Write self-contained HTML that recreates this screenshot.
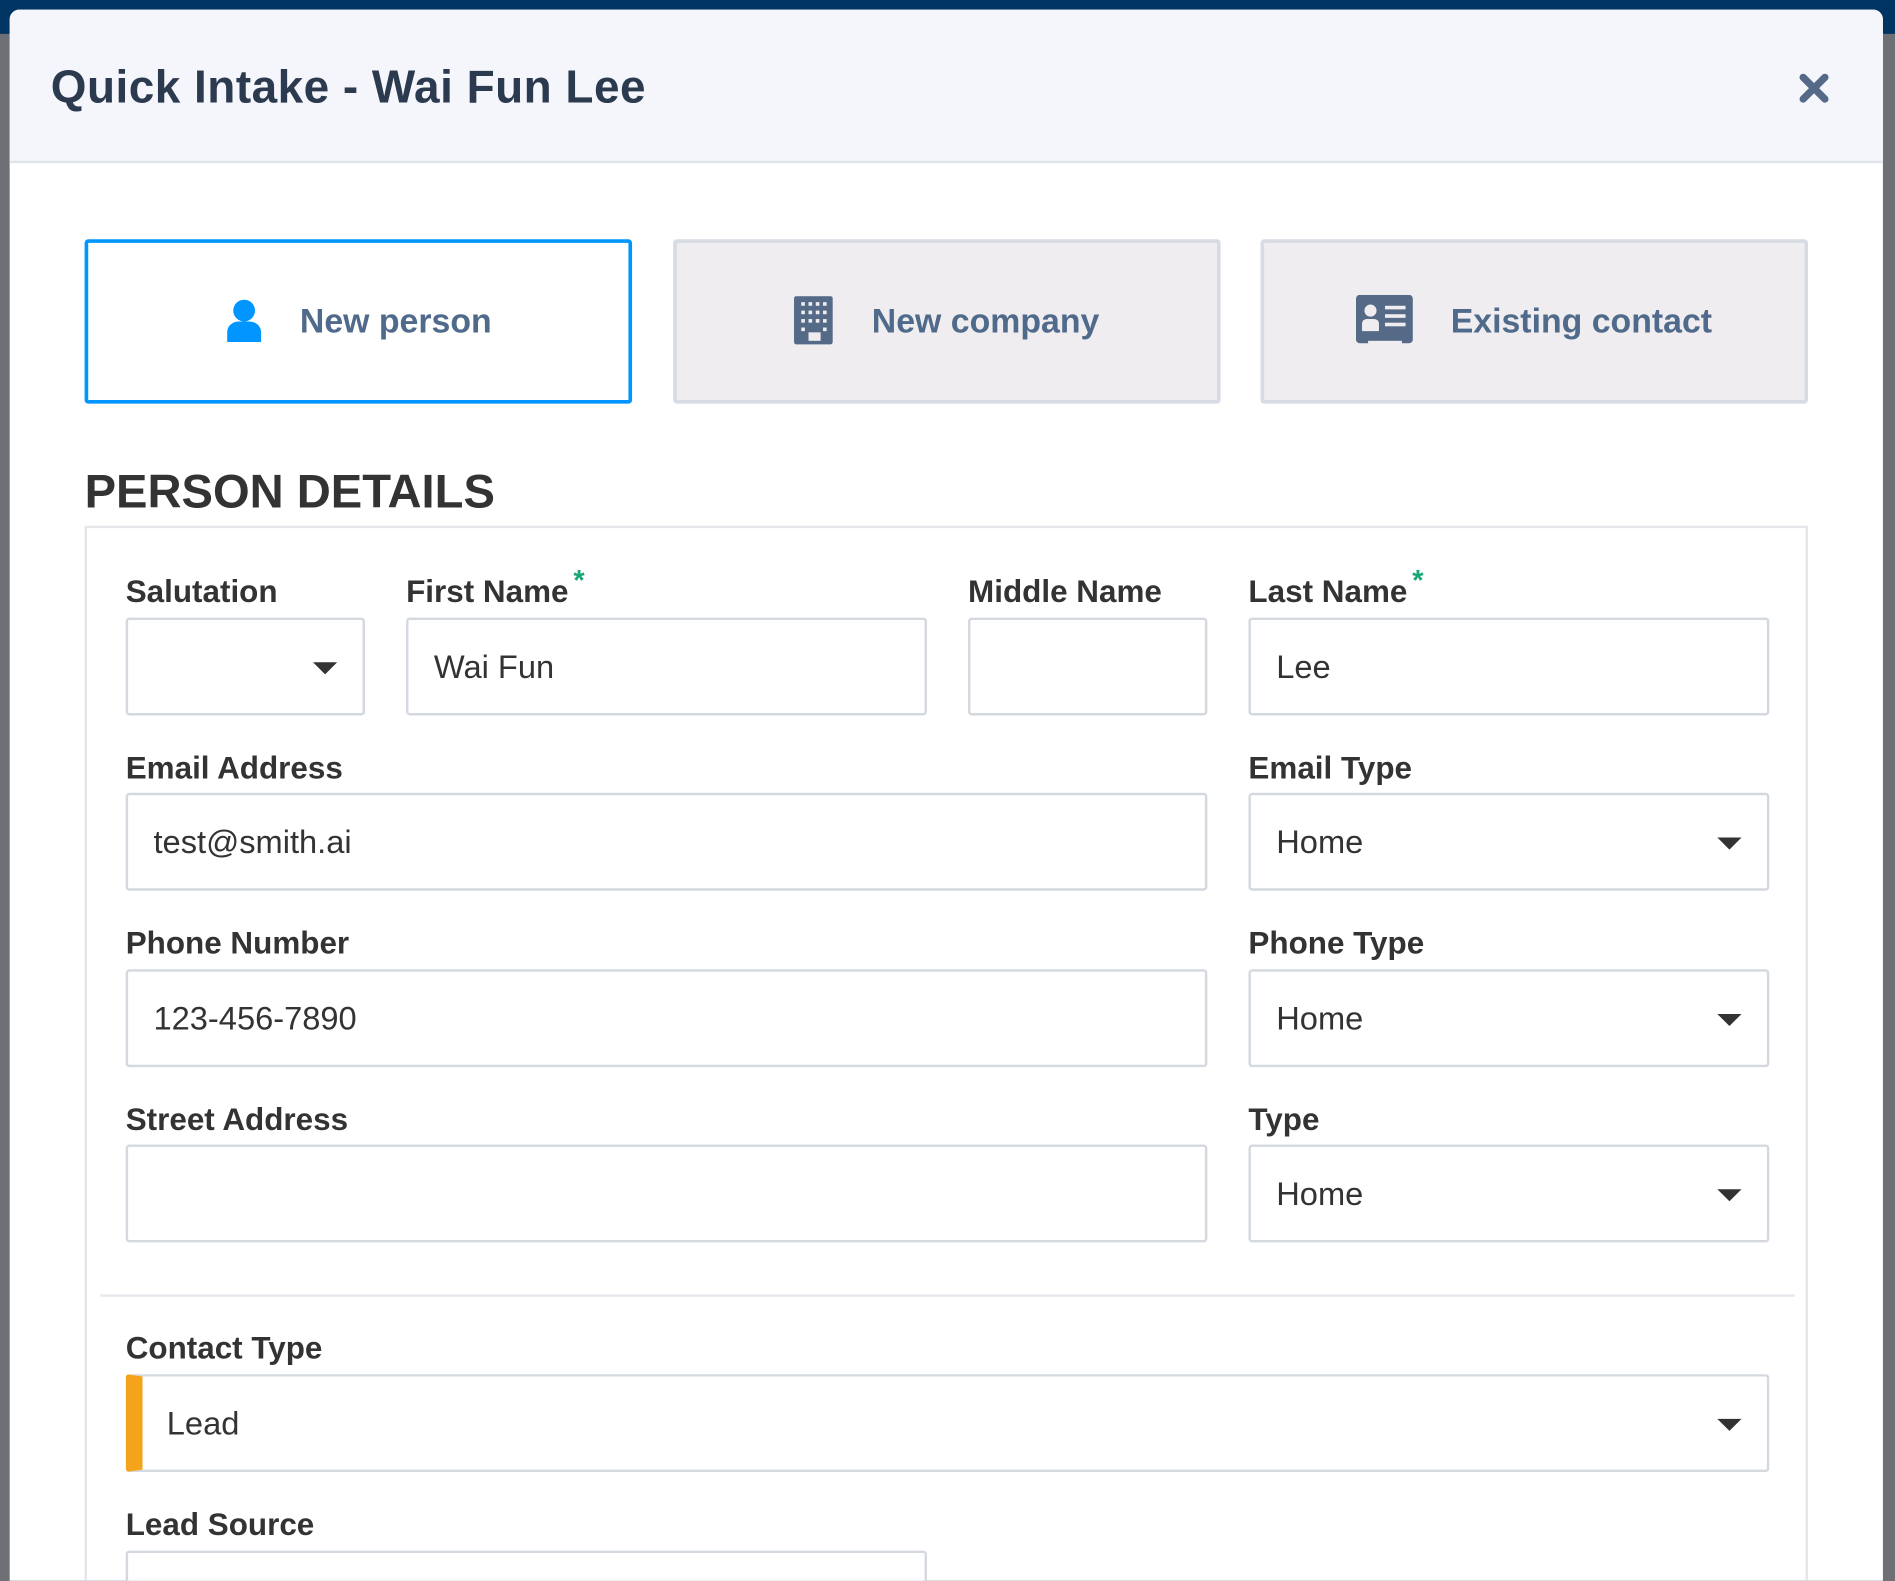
<!DOCTYPE html>
<html><head><meta charset="utf-8">
<style>
html,body{margin:0;padding:0;width:1895px;height:1564px;overflow:hidden;background:#6f7075;}
#s{position:absolute;left:0;top:0;width:1568px;height:1294px;transform:scale(1.20855);transform-origin:0 0;font-family:"Liberation Sans",sans-serif;}
.a{position:absolute;}
.topbar{left:0;top:0;width:1568px;height:28px;background:#003462;}
.modal{left:8px;top:8px;width:1550px;height:1300px;background:#fff;border-radius:8px 8px 0 0;overflow:hidden;}
.hdr{left:0;top:0;width:1550px;height:125px;background:#f4f6fb;border-bottom:2px solid #e0e3ea;}
.title{left:34px;top:44px;font-size:38px;font-weight:bold;color:#2b3a4e;letter-spacing:0.4px;}
.btn{top:190px;height:130px;width:447px;border:3px solid #d7dbe3;background:#efedf0;border-radius:3px;display:flex;align-items:center;justify-content:center;color:#4f6a8a;font-size:28px;font-weight:bold;}
.btn.sel{border-color:#0095ff;background:#fff;}
.btn svg{margin-right:30px;}
.sec{left:62px;top:378px;font-size:39px;font-weight:bold;color:#333;}
.panel{left:62px;top:427px;width:1422px;height:900px;border:2px solid #e4e6ea;}
.lbl{font-size:26px;font-weight:bold;color:#333;}
.star{color:#17a673;font-size:24px;position:relative;top:-10px;margin-left:4px;}
.f{height:81px;border:2px solid #d4d8df;border-radius:3px;box-sizing:border-box;font-size:27px;color:#333;padding-left:21px;line-height:78px;background:#fff;}
.car{position:absolute;right:21px;top:35px;width:0;height:0;border-left:10px solid transparent;border-right:10px solid transparent;border-top:10px solid #333;}
.div{left:75px;top:1063px;width:1402px;height:2px;background:#e6e8ec;}
</style></head><body>
<div id="s">
<div class="a topbar"></div>
<div class="a modal">
  <div class="a hdr"></div>
  <div class="a title">Quick Intake - Wai Fun Lee</div>
  <svg class="a" style="left:1480px;top:52px" width="26" height="26" viewBox="0 0 26 26"><path d="M4 4L22 22M22 4L4 22" stroke="#546a86" stroke-width="6" stroke-linecap="round"/></svg>

  <div class="a btn sel" style="left:62px">
    <svg width="32" height="38" viewBox="0 0 32 38"><circle cx="16" cy="10" r="9" fill="#0095ff"/><path d="M2 36V28C2 22 7 19 12 19H20C25 19 30 22 30 28V36Z" fill="#0095ff"/></svg>
    <span>New person</span></div>
  <div class="a btn" style="left:549px">
    <svg width="34" height="42" viewBox="0 0 34 42"><rect x="0" y="0" width="32" height="40" rx="2" fill="#546a86"/>
    <g fill="#efedf0"><rect x="6" y="5" width="3" height="3"/><rect x="12" y="5" width="3" height="3"/><rect x="18" y="5" width="3" height="3"/><rect x="24" y="5" width="3" height="3"/>
    <rect x="6" y="12" width="3" height="3"/><rect x="12" y="12" width="3" height="3"/><rect x="18" y="12" width="3" height="3"/><rect x="24" y="12" width="3" height="3"/>
    <rect x="6" y="19" width="3" height="3"/><rect x="12" y="19" width="3" height="3"/><rect x="18" y="19" width="3" height="3"/><rect x="24" y="19" width="3" height="3"/>
    <rect x="6" y="26" width="3" height="3"/><rect x="24" y="26" width="3" height="3"/><rect x="12" y="30" width="10" height="7"/></g></svg>
    <span>New company</span></div>
  <div class="a btn" style="left:1035px">
    <svg width="48" height="44" viewBox="0 0 48 44"><rect x="0" y="0" width="47" height="40" rx="3" fill="#546a86"/><rect x="10" y="38" width="28" height="5" fill="#efedf0"/>
    <circle cx="12" cy="13" r="5" fill="#efedf0"/><path d="M5 30V24C5 21 7 20 10 20H14C17 20 19 21 19 24V30Z" fill="#efedf0"/>
    <g fill="#efedf0"><rect x="24" y="9" width="17" height="3"/><rect x="24" y="16" width="17" height="3"/><rect x="24" y="23" width="17" height="3"/></g></svg>
    <span>Existing contact</span></div>

  <div class="a sec">PERSON DETAILS</div>
  <div class="a panel"></div>

  <div class="a lbl" style="left:96px;top:466px">Salutation</div>
  <div class="a lbl" style="left:328px;top:466px">First Name<span class="star">*</span></div>
  <div class="a lbl" style="left:793px;top:466px">Middle Name</div>
  <div class="a lbl" style="left:1025px;top:466px">Last Name<span class="star">*</span></div>
  <div class="a f" style="left:96px;top:503px;width:198px"><div class="car"></div></div>
  <div class="a f" style="left:328px;top:503px;width:431px">Wai Fun</div>
  <div class="a f" style="left:793px;top:503px;width:198px"></div>
  <div class="a f" style="left:1025px;top:503px;width:431px">Lee</div>

  <div class="a lbl" style="left:96px;top:612px">Email Address</div>
  <div class="a lbl" style="left:1025px;top:612px">Email Type</div>
  <div class="a f" style="left:96px;top:648px;width:895px">test@smith.ai</div>
  <div class="a f" style="left:1025px;top:648px;width:431px">Home<div class="car"></div></div>

  <div class="a lbl" style="left:96px;top:757px">Phone Number</div>
  <div class="a lbl" style="left:1025px;top:757px">Phone Type</div>
  <div class="a f" style="left:96px;top:794px;width:895px">123-456-7890</div>
  <div class="a f" style="left:1025px;top:794px;width:431px">Home<div class="car"></div></div>

  <div class="a lbl" style="left:96px;top:903px">Street Address</div>
  <div class="a lbl" style="left:1025px;top:903px">Type</div>
  <div class="a f" style="left:96px;top:939px;width:895px"></div>
  <div class="a f" style="left:1025px;top:939px;width:431px">Home<div class="car"></div></div>

  <div class="a div"></div>

  <div class="a lbl" style="left:96px;top:1092px">Contact Type</div>
  <div class="a f" style="left:96px;top:1129px;width:1360px;padding-left:20px;border-left:14px solid #f5a31a">Lead<div class="car"></div></div>

  <div class="a lbl" style="left:96px;top:1238px">Lead Source</div>
  <div class="a f" style="left:96px;top:1275px;width:663px"></div>
</div>
</div>
</body></html>
